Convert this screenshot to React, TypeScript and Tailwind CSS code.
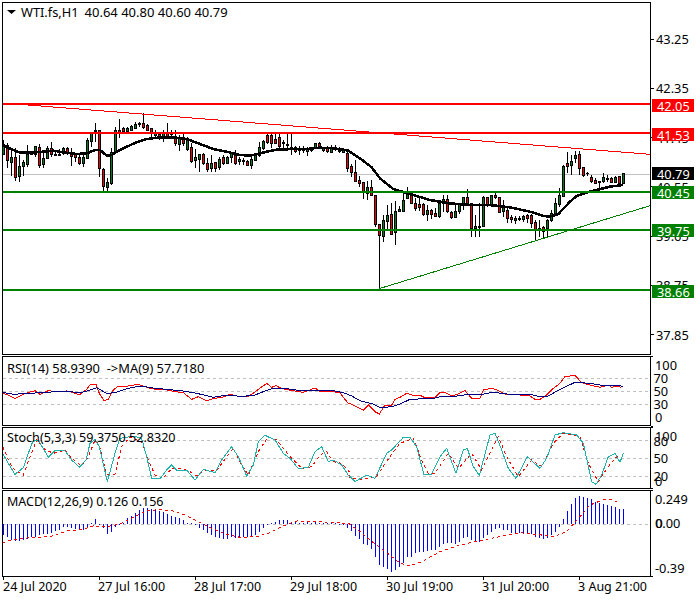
type P = [number, number][];
type C = [number, number, number, number, string];

const seg1: C[] = [
  [105,150,118,148,'g'],[115,190,120,165,'r'],[135,212,155,170,'g'],[130,228,157,215,'r'],[150,232,182,212,'g'],[165,212,172,182,'g'],[120,185,148,178,'g'],[142,150,144,147,'g'],
  [124,155,124,148,'g'],[118,190,127,180,'r'],[145,190,160,178,'g'],[122,160,130,160,'g'],[112,155,130,148,'r'],[136,152,146,150,'r'],[132,152,146,149,'g'],[125,150,130,143,'g'],
  [125,150,130,140,'r'],[130,182,145,152,'r'],[143,172,147,156,'r'],[150,180,156,175,'r'],[145,185,155,175,'g'],[100,162,106,158,'g'],[80,125,80,108,'g'],[55,112,74,78,'r'],
  [76,215,76,190,'r'],[190,258,192,242,'r'],[220,258,232,245,'g'],[130,240,140,234,'g'],[65,140,76,140,'g'],[42,100,76,80,'r'],[66,82,68,78,'r'],[65,80,68,78,'g'],
  [60,78,63,74,'g'],[52,70,56,68,'g'],[50,65,54,58,'r'],[25,72,55,66,'r'],[58,78,60,74,'r'],[68,100,70,84,'r'],[75,100,80,90,'g'],[84,104,88,100,'r'],
];
const seg2: C[] = [
  [30,65,35,52,'g'],[10,55,35,50,'r'],[30,50,38,42,'g'],[30,78,48,68,'r'],[45,92,55,72,'g'],[40,78,55,68,'r'],[50,92,60,88,'g'],[70,130,82,122,'r'],
  [88,145,112,120,'g'],[102,155,102,118,'g'],[100,135,102,130,'r'],[115,155,128,146,'r'],[105,155,128,144,'g'],[125,155,125,145,'r'],[110,150,118,142,'g'],[105,135,112,130,'r'],
  [108,130,112,128,'g'],[95,128,100,112,'g'],[90,135,106,130,'r'],[110,135,118,122,'g'],[115,135,120,124,'g'],[120,138,122,134,'r'],[110,148,118,135,'g'],[100,120,105,120,'g'],
  [65,110,82,104,'g'],[60,90,62,84,'g'],[42,72,45,65,'r'],[40,85,45,70,'r'],[42,72,56,70,'r'],[42,85,52,78,'r'],[60,90,67,70,'g'],[42,92,72,75,'g'],
  [42,105,80,85,'g'],[78,100,82,94,'r'],[78,105,87,90,'g'],[78,98,86,90,'g'],[80,108,84,92,'g'],[80,95,85,90,'g'],[68,88,70,82,'g'],[65,88,68,80,'r'],
];
const seg3: C[] = [
  [20,35,25,30,'g'],[18,38,22,32,'r'],[16,36,22,35,'g'],[15,32,20,28,'g'],[22,40,28,34,'g'],[25,40,30,35,'g'],[35,95,38,84,'r'],[72,110,78,95,'r'],
  [60,125,97,122,'r'],[108,140,120,128,'r'],[125,178,126,155,'r'],[122,180,142,158,'g'],[120,165,142,165,'r'],[165,262,165,252,'r'],[252,445,252,284,'r'],[225,305,240,288,'g'],
  [195,270,225,242,'g'],[190,285,222,282,'r'],[182,315,213,276,'g'],[198,215,208,212,'g'],[155,215,180,213,'g'],[142,178,160,175,'g'],[155,190,165,188,'r'],[175,212,188,205,'r'],
  [175,212,192,200,'r'],[190,228,192,222,'r'],[195,242,210,222,'g'],[208,238,210,222,'r'],[205,232,218,228,'r'],[180,235,190,228,'g'],[165,215,178,190,'g'],[165,218,178,214,'r'],
  [212,238,216,232,'r'],[190,235,212,232,'g'],[190,222,192,212,'g'],[172,210,172,192,'g'],[148,190,172,188,'r'],[190,290,190,265,'r'],[225,290,258,265,'g'],[190,290,258,262,'g'],
];
const seg4: C[] = [
  [168,262,172,258,'g'],[172,200,172,196,'r'],[165,200,165,195,'g'],[155,178,165,172,'r'],[170,220,172,215,'r'],[180,232,200,212,'g'],[205,248,210,235,'r'],[225,248,230,238,'r'],
  [228,252,235,240,'g'],[228,244,235,238,'g'],[225,245,228,238,'g'],[222,250,225,235,'r'],[222,265,226,250,'r'],[240,302,245,270,'r'],[240,292,265,270,'g'],[258,298,260,272,'r'],
  [238,290,240,265,'g'],[210,245,218,240,'g'],[175,225,190,218,'g'],[145,200,165,192,'g'],[75,170,78,168,'g'],[35,100,70,78,'r'],[45,105,62,76,'g'],[32,70,45,55,'g'],
  [32,105,42,85,'r'],[80,112,82,106,'r'],[95,108,98,100,'r'],[105,130,110,122,'r'],[115,132,120,128,'r'],[122,145,122,126,'g'],[98,128,112,122,'g'],[105,125,113,116,'g'],
  [112,128,114,125,'r'],[108,128,110,126,'g'],[108,128,108,128,'r'],[98,130,100,128,'g'],
];

const candles = [
  ...seg1.map((c) => [105, ...c] as const),
  ...seg2.map((c) => [120, ...c] as const),
  ...seg3.map((c) => [140, ...c] as const),
  ...seg4.map((c) => [140, ...c] as const),
].map(([off, a, b, c, d, col], i) => ({
  x: 3 + 4 * i,
  hi: Math.round(off + a / 3),
  lo: Math.round(off + b / 3),
  top: Math.round(off + c / 3),
  bot: Math.round(off + d / 3),
  col,
}));

const abs = (l: P, xo: number, yo: number): string =>
  l.map(([x, y]) => `${xo + x / 3},${yo + y / 3}`).join(' ');
const two = (a: P, b: P, yo: number, yb = yo) => abs(a, 0, yo) + ' ' + abs(b, 350, yb);

const ma = two(
  [[8,437],[40,450],[60,458],[100,458],[130,455],[160,452],[190,457],[230,462],[260,460],[285,450],[300,450],[320,467],[335,465],[345,458],[380,440],[410,427],[440,417],[480,412],[520,412],[560,417],[600,432],[640,447],[680,455],[720,465],[750,467],[770,463],[800,455],[830,449],[880,447],[920,447],[960,443],[1000,445],[1045,452]],
  [[0,185],[30,205],[65,232],[90,265],[130,297],[180,312],[240,330],[300,340],[360,345],[420,345],[480,352],[540,365],[580,378],[600,380],[625,372],[660,335],[680,318],[720,305],[780,290],[820,285]],
  0, 90,
);

const rsiRed = two(
  [[8,130],[25,135],[45,145],[65,135],[85,127],[105,122],[120,133],[145,122],[170,125],[200,123],[220,128],[238,135],[258,120],[270,105],[288,103],[298,130],[312,152],[325,148],[340,120],[355,108],[385,108],[415,103],[440,112],[465,118],[490,118],[520,124],[550,128],[575,148],[595,140],[620,153],[640,145],[665,143],[690,132],[710,138],[745,140],[770,122],[800,100],[815,112],[828,107],[845,116],[880,122],[910,127],[945,114],[960,124],[985,123],[1020,128],[1035,148],[1045,160]],
  [[0,160],[20,170],[40,180],[55,165],[75,185],[88,192],[105,165],[125,165],[135,148],[150,142],[170,130],[195,138],[210,136],[225,143],[255,143],[270,128],[285,128],[305,138],[325,132],[345,122],[365,145],[390,145],[400,120],[425,115],[440,120],[470,134],[510,135],[535,135],[555,148],[570,148],[590,135],[610,115],[630,100],[645,80],[675,76],[695,98],[720,105],[750,112],[775,105],[785,112],[805,108],[812,113]],
  350,
);
const rsiBlue = two(
  [[8,127],[40,133],[80,130],[130,128],[190,123],[240,128],[265,122],[290,113],[320,130],[345,128],[380,116],[420,108],[460,114],[500,118],[550,123],[590,130],[640,142],[680,135],[720,139],[760,137],[790,125],[820,115],[860,116],[900,122],[1000,122],[1030,128],[1048,135]],
  [[0,135],[30,152],[70,162],[90,173],[125,170],[150,162],[180,148],[250,145],[280,138],[320,138],[350,134],[390,134],[430,127],[470,132],[540,133],[570,140],[595,138],[630,118],[675,97],[720,100],[760,107],[810,107],[818,109]],
  350,
);
const stTeal = two(
  [[8,310],[25,340],[45,373],[70,353],[85,310],[100,270],[115,270],[145,322],[165,302],[195,302],[215,330],[238,352],[258,330],[270,280],[285,268],[298,290],[322,395],[345,310],[360,265],[400,258],[425,265],[440,320],[455,385],[480,387],[500,360],[515,345],[530,360],[560,360],[585,390],[610,358],[645,368],[665,330],[695,290],[715,320],[740,378],[760,345],[775,275],[795,256],[825,270],[850,310],[870,325],[895,356],[925,352],[945,305],[965,290],[985,335],[1000,330],[1025,345],[1048,380]],
  [[0,380],[15,395],[50,375],[75,385],[110,310],[125,300],[160,262],[180,262],[200,290],[222,375],[245,372],[270,320],[290,295],[318,370],[340,300],[352,295],[370,350],[388,376],[420,255],[435,250],[455,300],[475,355],[498,385],[532,320],[570,355],[590,325],[615,255],[640,248],[680,255],[700,280],[725,395],[738,403],[755,375],[775,320],[795,310],[810,337],[820,310]],
  350,
);
const stRed = two(
  [[8,290],[30,340],[45,360],[70,375],[90,320],[110,270],[135,298],[160,310],[195,300],[215,325],[245,348],[265,320],[285,270],[298,285],[320,375],[345,372],[365,290],[390,262],[425,275],[445,330],[465,375],[490,385],[515,355],[535,355],[565,362],[590,378],[615,360],[650,362],[680,320],[700,295],[725,345],[745,375],[775,305],[805,260],[830,270],[850,295],[875,325],[905,355],[935,350],[960,315],[980,305],[1000,335],[1025,340],[1048,365]],
  [[0,385],[40,388],[80,378],[120,320],[150,280],[190,265],[215,330],[235,370],[255,370],[295,310],[325,355],[365,310],[395,360],[445,260],[470,320],[505,380],[545,330],[575,350],[610,280],[640,250],[690,260],[715,340],[745,395],[775,350],[800,320],[815,325]],
  350,
);
const macdSig = two(
  [[8,578],[40,568],[100,562],[150,560],[200,543],[250,538],[280,528],[320,530],[360,522],[400,502],[440,482],[480,479],[520,483],[560,497],[600,517],[640,537],[680,553],[720,562],[770,560],[810,548],[850,528],[890,513],[950,514],[1000,518],[1045,520]],
  [[0,523],[30,545],[70,578],[110,608],[150,640],[180,647],[215,635],[270,605],[330,585],[400,570],[450,560],[510,548],[560,553],[610,560],[650,545],[690,500],[720,465],[760,449],[790,450],[810,462]],
  350,
);
const hist = [555,560,570,572,572,570,568,562,560,555,553,553,548,544,540,532,530,534,536,540,540,532,518,508,526,535,552,545,532,525,518,505,497,488,480,475,475,478,480,484,486,492,497,500,505,510,518,520,526,535,540,550,555,560,565,566,568,562,565,562,562,562,558,555,545,535,525,520,515,511,510,510,515,515,518,518,516,520,517,520,518,520,520,520,524,524,535,
  543,557,567,583,585,597,622,645,650,657,665,660,650,640,622,622,610,605,605,603,600,600,590,582,580,578,582,577,565,560,570,575,575,565,555,545,538,535,540,540,548,548,550,552,550,552,560,565,567,565,555,545,530,507,483,462,445,439,440,443,448,455,458,462,464,468,472,477,477];

function PriceSvg() {
  return (
    <svg viewBox="3 3 647 351" className="absolute inset-0 w-[647px] h-[351px]" shapeRendering="crispEdges">
      <rect x="3" y="174" width="647" height="1" fill="#c0c0c0" />
      {candles.map((c) => (
        <g key={c.x}>
          <rect x={c.x} y={c.hi} width="1" height={Math.max(1, c.lo - c.hi)} fill="#000" />
          <rect x={c.x - 1} y={c.top} width="3" height={Math.max(1, c.bot - c.top + 1)} fill="#000" />
          {c.bot - c.top >= 2 && (
            <rect x={c.x} y={c.top + 1} width="1" height={c.bot - c.top - 1} fill={c.col === 'g' ? '#007a1e' : '#f00000'} />
          )}
        </g>
      ))}
      <polyline points={ma} fill="none" stroke="#000" strokeWidth="2.5" />
      <line x1="3" y1="103" x2="650" y2="154.3" stroke="#ff0000" strokeWidth="1" />
      <line x1="379" y1="288.7" x2="650" y2="205.7" stroke="#008000" strokeWidth="1" />
      <rect x="3" y="103" width="647" height="2" fill="#ff0000" />
      <rect x="3" y="132" width="647" height="2" fill="#ff0000" />
      <rect x="3" y="191" width="647" height="2" fill="#008000" />
      <rect x="3" y="229" width="647" height="2" fill="#008000" />
      <rect x="3" y="289" width="647" height="2" fill="#008000" />
    </svg>
  );
}

function Level({ y }: { y: number }) {
  return <line x1="3" x2="650" y1={y + 0.5} y2={y + 0.5} stroke="#c0c0c0" strokeDasharray="3 3" />;
}

const T = 'whitespace-pre h-[14px] leading-[14px] text-[12.8px] text-black';
const Tag = 'absolute left-px w-[42px] h-[13px] pl-[5px] leading-[14px] text-[12.8px] text-white whitespace-pre';
const Title = 'absolute left-[4px] flex items-center ' + T;
const Stub = 'absolute left-0 w-[2px] h-px bg-black';

function PriceLabel({ text }: { text: string }) {
  return (
    <div className="flex items-center gap-[2px] h-[14px]">
      <i className="w-[3px] h-px bg-black" />
      <span className={T}>{text}</span>
    </div>
  );
}

function TimeLabel({ text, first }: { text: string; first?: boolean }) {
  return (
    <div className="w-[96px] flex flex-col">
      <i className="w-px h-[3px] bg-black" />
      <span className={(first ? '' : '-ml-px ') + 'whitespace-pre h-[14px] leading-[14px] text-[12.5px] text-black'}>{text}</span>
    </div>
  );
}

export default function App() {
  return (
    <div className="w-[700px] h-[600px] bg-white pl-[2px] pt-[2px] flex flex-col gap-px overflow-hidden font-['Noto_Sans',sans-serif]">
      <div className="flex">
        <div className="relative w-[649px] h-[353px] border border-black">
          <PriceSvg />
          <div className={Title + ' top-[2px] gap-[5px]'}>
            <svg viewBox="0 0 9 4" className="w-[9px] h-[4px]">
              <polygon points="0,0 9,0 4.5,4" fill="#000" />
            </svg>
            <span>WTI.fs,H1</span>
            <span className="ml-[1px] text-[13px]">40.64 40.80 40.60 40.79</span>
          </div>
        </div>
        <div className="relative flex-1 flex flex-col pt-[30px] gap-[35.25px]">
          <PriceLabel text="43.25" />
          <PriceLabel text="42.35" />
          <PriceLabel text="41.45" />
          <PriceLabel text="40.55" />
          <PriceLabel text="39.65" />
          <PriceLabel text="38.75" />
          <PriceLabel text="37.85" />
          <span className={Tag + ' top-[97px] bg-[#ff0000]'}>42.05</span>
          <span className={Tag + ' top-[126px] bg-[#ff0000]'}>41.53</span>
          <span className={Tag + ' top-[165px] bg-black'}>40.79</span>
          <span className={Tag + ' top-[184px] bg-[#008000]'}>40.45</span>
          <span className={Tag + ' top-[222px] bg-[#008000]'}>39.75</span>
          <span className={Tag + ' top-[283px] bg-[#008000]'}>38.66</span>
        </div>
      </div>

      <div className="flex">
        <div className="relative w-[649px] h-[70px] border border-black">
          <svg viewBox="3 357 647 68" className="absolute inset-0 w-[647px] h-[68px]" shapeRendering="crispEdges">
            <Level y={378} />
            <Level y={391} />
            <Level y={404} />
            <polyline points={rsiRed} fill="none" stroke="#ff0000" />
            <polyline points={rsiBlue} fill="none" stroke="#000080" />
          </svg>
          <div className={Title + ' top-[4px] text-[12.9px]'}>RSI(14) 58.9390  -&gt;MA(9) 57.7180</div>
        </div>
        <div className="relative flex-1 flex flex-col pt-[2px] -space-y-px">
          <i className={Stub + ' top-0'} />
          <i className={Stub + ' bottom-0'} />
          <span className={T + ' pl-[4px]'}>100</span>
          <span className={T + ' pl-[2.5px]'}>70</span>
          <span className={T + ' pl-[2.5px]'}>50</span>
          <span className={T + ' pl-[2.5px]'}>30</span>
          <span className={T + ' pl-[4px]'}>0</span>
        </div>
      </div>

      <div className="flex">
        <div className="relative w-[649px] h-[62px] border border-black">
          <svg viewBox="3 428 647 60" className="absolute inset-0 w-[647px] h-[60px]" shapeRendering="crispEdges">
            <Level y={440} />
            <Level y={458} />
            <Level y={476} />
            <polyline points={stRed} fill="none" stroke="#ff0000" strokeDasharray="3 3" />
            <polyline points={stTeal} fill="none" stroke="#20b2aa" />
          </svg>
          <div className="absolute left-[4px] top-[3px] flex items-center whitespace-pre h-[14px] leading-[14px] text-[12.6px] text-black">Stoch(5,3,3) 59.3750 52.8320</div>
        </div>
        <div className="relative flex-1 flex flex-col pt-[2px]">
          <i className={Stub + ' top-0'} />
          <i className={Stub + ' bottom-0'} />
          <span className={T + ' pl-[4px]'}>100</span>
          <span className={T + ' pl-[2.5px] -mt-[9px]'}>80</span>
          <span className={T + ' pl-[2.5px] mt-[3px]'}>50</span>
          <span className={T + ' pl-[2.5px] mt-[4px]'}>20</span>
          <span className={T + ' pl-[4px] -mt-[9px]'}>0</span>
        </div>
      </div>

      <div className="flex">
        <div className="relative w-[649px] h-[87px] border border-black">
          <svg viewBox="3 491 647 85" className="absolute inset-0 w-[647px] h-[85px]" shapeRendering="crispEdges">
            <Level y={524} />
            {hist.map((z, i) => {
              const y = 350 + z / 3;
              return (
                <rect key={i} x={3 + 4 * i} y={Math.round(Math.min(y, 524))} width="1" height={Math.max(1, Math.round(Math.abs(y - 524)))} fill="#0000ff" />
              );
            })}
            <polyline points={macdSig} fill="none" stroke="#ff0000" strokeDasharray="3 3" />
          </svg>
          <div className="absolute left-[4px] top-[4px] flex items-center whitespace-pre h-[14px] leading-[14px] text-[12.5px] text-black">MACD(12,26,9) 0.126 0.156</div>
        </div>
        <div className="relative flex-1 flex flex-col pt-[2px] pl-[4px]">
          <i className={Stub + ' top-0'} />
          <i className={Stub + ' bottom-0'} />
          <span className={T}>0.249</span>
          <div className="relative mt-[10px]">
            <span className={T + ' block'}>0.00</span>
            <span className={T + ' absolute left-[0.5px] top-0'}>0</span>
          </div>
          <span className={T + ' mt-[31px]'}>-0.39</span>
        </div>
      </div>

      <div className="flex pl-px -mt-px">
        <TimeLabel first text="24 Jul 2020" />
        <TimeLabel text="27 Jul 16:00" />
        <TimeLabel text="28 Jul 17:00" />
        <TimeLabel text="29 Jul 18:00" />
        <TimeLabel text="30 Jul 19:00" />
        <TimeLabel text="31 Jul 20:00" />
        <TimeLabel text="3 Aug 21:00" />
      </div>
    </div>
  );
}
